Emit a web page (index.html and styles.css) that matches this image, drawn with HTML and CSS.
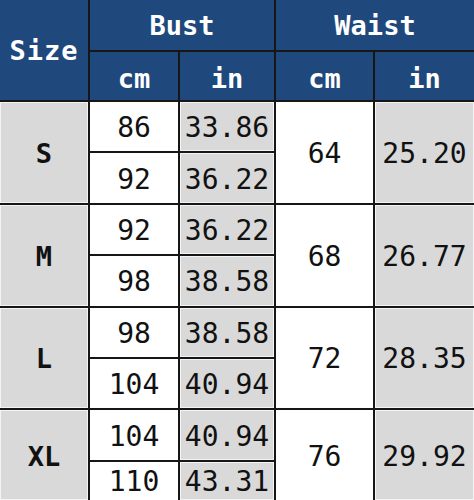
FILE: index.html
```html
<!DOCTYPE html>
<html lang="en">
<head>
<meta charset="utf-8">
<title>Size Chart</title>
<link rel="stylesheet" href="styles.css">
</head>
<body>
<div class="chart">
  <div class="cell head size-head">Size</div>
  <div class="cell head span-c2">Bust</div>
  <div class="cell head span-c2">Waist</div>
  <div class="cell head sub">cm</div>
  <div class="cell head sub">in</div>
  <div class="cell head sub">cm</div>
  <div class="cell head sub">in</div>

  <div class="cell gray size span-r2">S</div>
  <div class="cell white">86</div>
  <div class="cell gray">33.86</div>
  <div class="cell white span-r2">64</div>
  <div class="cell gray span-r2">25.20</div>
  <div class="cell white">92</div>
  <div class="cell gray">36.22</div>

  <div class="cell gray size span-r2">M</div>
  <div class="cell white">92</div>
  <div class="cell gray">36.22</div>
  <div class="cell white span-r2">68</div>
  <div class="cell gray span-r2">26.77</div>
  <div class="cell white">98</div>
  <div class="cell gray">38.58</div>

  <div class="cell gray size span-r2">L</div>
  <div class="cell white">98</div>
  <div class="cell gray">38.58</div>
  <div class="cell white span-r2">72</div>
  <div class="cell gray span-r2">28.35</div>
  <div class="cell white">104</div>
  <div class="cell gray">40.94</div>

  <div class="cell gray size span-r2">XL</div>
  <div class="cell white">104</div>
  <div class="cell gray">40.94</div>
  <div class="cell white span-r2">76</div>
  <div class="cell gray span-r2">29.92</div>
  <div class="cell white">110</div>
  <div class="cell gray">43.31</div>
</div>
</body>
</html>
```
FILE: styles.css
```css
html, body {
  margin: 0;
  padding: 0;
  overflow: hidden;
  background: #ffffff;
}

.chart {
  display: grid;
  width: 474px;
  height: 500px;
  grid-template-columns: 88px 88px 94px 97px 99px;
  grid-template-rows: 50px 48px repeat(7, 49.4px) 1fr;
  gap: 2px;
  background: #161616;
  font-family: "DejaVu Sans Mono", monospace;
}

.cell {
  display: flex;
  align-items: center;
  justify-content: center;
  font-size: 28px;
  color: #111111;
  padding-top: 2px;
  box-sizing: border-box;
}

.head {
  background: #1f497d;
  color: #ffffff;
  font-weight: bold;
  font-size: 27px;
  padding-top: 0;
}

.size-head {
  grid-row: span 2;
  letter-spacing: 1px;
}

.sub {
  padding-top: 4px;
}

.span-c2 {
  grid-column: span 2;
}

.span-r2 {
  grid-row: span 2;
}

.gray {
  background: #d9d9d9;
  box-shadow: inset 0 0 0 1px #f4f4f4;
}

.white {
  background: #ffffff;
}

.size {
  font-weight: bold;
  font-size: 27px;
}
```
